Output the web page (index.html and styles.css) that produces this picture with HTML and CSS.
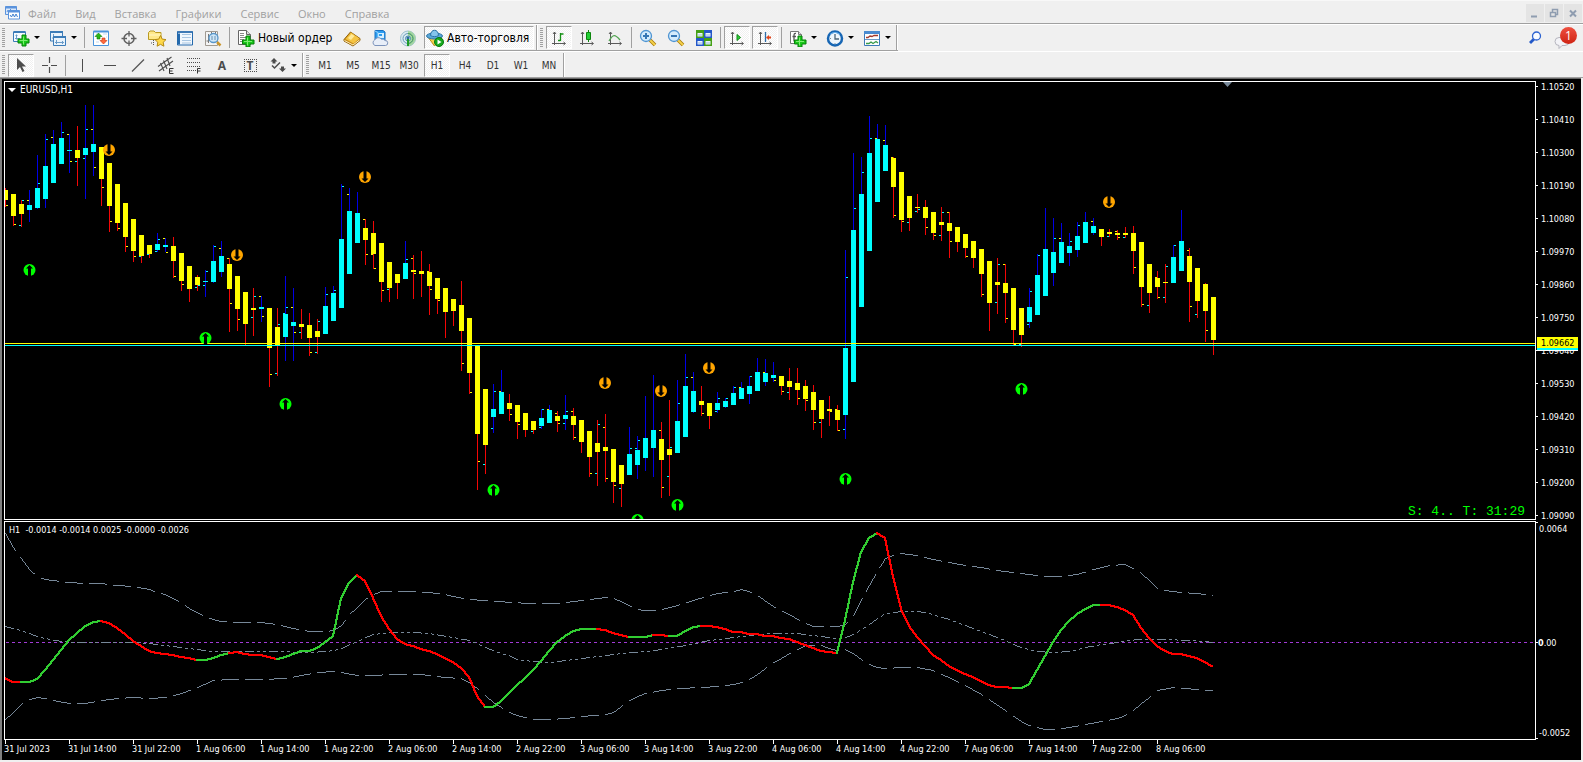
FILE: index.html
```html
<!DOCTYPE html>
<html lang="ru">
<head>
<meta charset="utf-8">
<title>EURUSD,H1</title>
<link rel="stylesheet" href="styles.css">
</head>
<body>
<header class="menubar">
  <svg class="app-icon" viewBox="0 0 16 16" aria-hidden="true"><path d="M.5 1.500h11v8H.5z" fill="#dbe9fb" stroke="#5b93dc"/><path d="M.5 2.500h11" stroke="#5b93dc" stroke-width="2"/><path d="M2 7l1-2 1 1 2-2" fill="none" stroke="#5b93dc"/><path d="M3.500 5.500h11v8.500h-11z" fill="#fff" stroke="#5b93dc"/><path d="M3.500 6.500h11" stroke="#5b93dc" stroke-width="2"/><path d="M5 10l1.500 2L8 9l1.500 3L11 9l1.500 3" fill="none" stroke="#3f7fd0"/></svg>
  <nav class="menu">
    <button>Файл</button><button>Вид</button><button>Вставка</button><button>Графики</button><button>Сервис</button><button>Окно</button><button>Справка</button>
  </nav>
  <div class="window-buttons">
    <button aria-label="Свернуть"><svg viewBox="0 0 18 18"><path d="M5 12.500h6" stroke="#8f9db0" stroke-width="2"/></svg></button>
    <button aria-label="Восстановить"><svg viewBox="0 0 18 18"><path d="M7.500 8V5.500h5v5H11M5.500 8.500h5v4h-5zM7 5.500h6M5 8.500h6" fill="none" stroke="#8f9db0" stroke-width="1.500"/></svg></button>
    <button aria-label="Закрыть"><svg viewBox="0 0 18 18"><path d="M6 6.500l6 6M12 6.500l-6 6" stroke="#8f9db0" stroke-width="2"/></svg></button>
  </div>
</header>

<div class="dock">
  <div class="toolbar toolbar-main">
    <i class="grip"></i>
    <button class="tool with-caret" aria-label="Новый график"><svg viewBox="0 0 18 18"><path d="M1.500 3h12v9.500h-12z" fill="#f6fbff" stroke="#3c7cb8"/><path d="M1.500 3h12" stroke="#3c7cb8" stroke-width="2"/><path d="M4.500 5.500v5M3 9.500h5M3.500 6.500h2" stroke="#6b9cc8"/><path d="M10 6h4v4h3v4h-3v3h-4v-3H6v-4h4z" fill="#19c819" stroke="#07800b"/><path d="M11.500 7.500v8M7.500 11.500h8" stroke="#7dee70"/></svg></button>
    <button class="tool with-caret" aria-label="Профили"><svg viewBox="0 0 18 18"><path d="M1.500 3h12v9h-12z" fill="#e9f3fc" stroke="#3c7cb8"/><path d="M1 3h13" stroke="#3c7cb8" stroke-width="2"/><path d="M4.500 5v5M3 9h5" stroke="#6b9cc8"/><path d="M4.500 8h12v8.500h-12z" fill="#e9f3fc" stroke="#3c7cb8"/><path d="M4 8h13" stroke="#3c7cb8" stroke-width="2"/><path d="M6 13.500h9M7.500 11v4M13.500 12v3" stroke="#6b9cc8"/></svg></button>
    <i class="sep"></i>
    <button class="tool" aria-label="Обзор рынка"><svg viewBox="0 0 18 18"><path d="M1.500 2.500h15v14h-15z" fill="#fff" stroke="#4a94dc"/><path d="M1.500 2.500h15" stroke="#4a94dc" stroke-width="2"/><path d="M4 5h1M4 13h3M11 5h4M14 8h1" stroke="#c5d9ef"/><path d="M6.500 4l3.500 3.500H8V10H5V7.500H3z" fill="#2bb818" stroke="#0b7d0c" stroke-width=".6"/><path d="M11.500 15L8 11.500h2V9h3v2.500h2z" fill="#ff6a3c" stroke="#c8310e" stroke-width=".6"/></svg></button>
    <button class="tool" aria-label="Окно данных"><svg viewBox="0 0 18 18"><circle cx="9" cy="9.500" r="5" fill="none" stroke="#606060" stroke-width="1.500"/><path d="M9 2v5.500M9 11.500V17M1.500 9.500H7M11 9.500h5.500" stroke="#606060" stroke-width="1.300"/></svg></button>
    <button class="tool" aria-label="Навигатор"><svg viewBox="0 0 18 18"><path d="M.5 3.500L2 2h4l1.500 1.500H13v7H.5z" fill="#ffe98b" stroke="#b99a22"/><path d="M1 6h12" stroke="#fff7c8"/><path d="M5.500 11v6M3 14h2" stroke="#555" stroke-dasharray="1 1"/><path d="M12.500 6.500l1.700 3.600 3.800.5-2.800 2.700.7 3.900-3.400-1.900-3.400 1.900.7-3.900L7 10.600l3.800-.5z" fill="#ffd94a" stroke="#b58a12"/></svg></button>
    <button class="tool" aria-label="Терминал"><svg viewBox="0 0 18 18"><path d="M1.500 3h15v13h-15z" fill="#f1f7fd" stroke="#2469ac"/><path d="M1 3h16" stroke="#2469ac" stroke-width="1.500"/><path d="M3 4.500v11" stroke="#2469ac" stroke-width="2"/><path d="M6 5.500h9M6 8.500h9M6 11.500h9M6 14h9" stroke="#a9c6e2"/></svg></button>
    <button class="tool" aria-label="Тестер стратегий"><svg viewBox="0 0 18 18"><path d="M1.500 2.500h12v14h-12z" fill="#f4f4f4" stroke="#a09a92"/><path d="M4.500 5v9M2.500 12h2M7.500 3v4M11.500 3v4" stroke="#777"/><path d="M13 13l3.500 3.500" stroke="#c9962e" stroke-width="2.500"/><circle cx="9.500" cy="9" r="4.500" fill="#cbe6fa" fill-opacity=".9" stroke="#5997cb" stroke-width="1.300"/><path d="M8 7v4M11 7v4" stroke="#6a91b0"/></svg></button>
    <i class="sep"></i>
    <button class="tool text-tool order"><svg viewBox="0 0 18 18"><path d="M1.500 1.500h8l4 4v10h-12z" fill="#fff" stroke="#666"/><path d="M9.500 1.500v4h4" fill="#ddd" stroke="#666"/><path d="M3 4.500h4M3 6.500h4M3 8.500h8M3 10.500h4M3 12.500h2" stroke="#888"/><path d="M9 7h4v4h4v4h-4v3H9v-3H5.500v-4H9z" fill="#19c819" stroke="#07800b"/><path d="M10.500 8.500v8M7 12.500h8" stroke="#7dee70"/></svg><span>Новый ордер</span></button>
    <button class="tool" aria-label="MetaEditor"><svg viewBox="0 0 18 18"><path d="M1 10.500L7.500 3 17 9.500v2L10 17l-9-5z" fill="#c98d18" stroke="#94640a"/><path d="M2.500 10L8 3.500l8.500 6-6 5z" fill="#f5c443"/><path d="M5 9l3.500-4 3 2-3.500 4z" fill="#ffe998"/><path d="M1.500 11.500l8.500 4.500 6.500-5" fill="none" stroke="#fff0c0"/></svg></button>
    <button class="tool" aria-label="Виртуальный хостинг"><svg viewBox="0 0 18 18"><path d="M4 1.500h8l2 1.500v8H4z" fill="#2b9cf0" stroke="#1870c0"/><path d="M7 4h6v5H7z" fill="#d7f0ff"/><path d="M4 2l3 1.500V10" fill="none" stroke="#95d4ff"/><path d="M8 6h3" stroke="#2b9cf0" stroke-width="2"/><path d="M4 16.500a3 3 0 0 1-.3-5.500 4 4 0 0 1 6.800-.8 3 3 0 0 1 3.500 1.300 2.500 2.500 0 0 1 .5 5z" fill="#e8eef8" stroke="#7c93bb"/></svg></button>
    <button class="tool" aria-label="Сигналы"><svg viewBox="0 0 18 18"><circle cx="9" cy="9.500" r="7.500" fill="#dcebf2" stroke="#9dbfce"/><path d="M9 2a7.500 7.500 0 0 1 0 15z" fill="#a3d6a0"/><circle cx="9" cy="9.500" r="5" fill="none" stroke="#679bb8"/><path d="M9 4.500a5 5 0 0 1 0 10" fill="none" stroke="#4fa558"/><circle cx="9" cy="9.500" r="2.500" fill="#cfe6ef" stroke="#4d8bad"/><circle cx="9" cy="9" r="1.500" fill="#2a6aa0"/><path d="M9 10v7" stroke="#1e9a28" stroke-width="2"/></svg></button>
    <button class="tool text-tool auto pressed"><svg viewBox="0 0 18 18"><path d="M2 8l6.500 9 7.500-9z" fill="#f4cf4f" stroke="#b88d1c"/><ellipse cx="8.500" cy="7" rx="8" ry="3" fill="#5aa7d8" stroke="#2b74a8"/><path d="M4.500 6.500c0-7 8-7 8 0-2 1.500-6 1.500-8 0z" fill="#85c5ec" stroke="#2b74a8"/><circle cx="13" cy="13" r="4.500" fill="#17a81c" stroke="#08780d"/><path d="M11.500 10.500l4 2.500-4 2.500z" fill="#fff"/></svg><span>Авто-торговля</span></button>
    <i class="bar-end"></i>
    <i class="grip"></i>
    <button class="tool pressed" aria-label="Бары"><svg viewBox="0 0 18 18"><path d="M4.500 3v13M2 14.500h13M3 5l1.500-2L6 5M13.500 13l2 1.500-2 1.500" fill="none" stroke="#5a5a5a"/><path d="M10.500 4v8M11 5h2.500M8 11.500h2.500" stroke="#159015" stroke-width="1.300"/></svg></button>
    <button class="tool" aria-label="Японские свечи"><svg viewBox="0 0 18 18"><path d="M4.500 3v13M2 14.500h13M3 5l1.500-2L6 5M13.500 13l2 1.500-2 1.500" fill="none" stroke="#5a5a5a"/><path d="M10.500 1v12" stroke="#0c860c"/><path d="M8.500 3.500h4v7h-4z" fill="#22cf35" stroke="#0c860c"/></svg></button>
    <button class="tool" aria-label="Линия"><svg viewBox="0 0 18 18"><path d="M4.500 3v13M2 14.500h13M3 5l1.500-2L6 5M13.500 13l2 1.500-2 1.500" fill="none" stroke="#5a5a5a"/><path d="M3 12c4-7 6-7 11-1" fill="none" stroke="#53a553" stroke-width="1.300"/></svg></button>
    <i class="sep"></i>
    <button class="tool" aria-label="Увеличить"><svg viewBox="0 0 18 18"><path d="M11 11l5 5" stroke="#a87d0b" stroke-width="3.500"/><path d="M11 11l5 5" stroke="#f5d24b" stroke-width="1.800"/><circle cx="7" cy="7" r="5.500" fill="#d3ebfc" stroke="#5095d2" stroke-width="1.300"/><path d="M7 4v6M4 7h6" stroke="#3576b4" stroke-width="2"/></svg></button>
    <button class="tool" aria-label="Уменьшить"><svg viewBox="0 0 18 18"><path d="M11 11l5 5" stroke="#a87d0b" stroke-width="3.500"/><path d="M11 11l5 5" stroke="#f5d24b" stroke-width="1.800"/><circle cx="7" cy="7" r="5.500" fill="#d3ebfc" stroke="#5095d2" stroke-width="1.300"/><path d="M4 7h6" stroke="#3576b4" stroke-width="2"/></svg></button>
    <button class="tool" aria-label="Окна мозаикой"><svg viewBox="0 0 18 18"><path d="M1 1h8v8H1zM9 9h8v8H9z" fill="#45a016"/><path d="M9 1h8v8H9zM1 9h8v8H1z" fill="#2458c9"/><path d="M2.500 4h5v3.500h-5zM10.500 4h5v3.500h-5zM2.500 12h5v3.500h-5zM10.500 12h5v3.500h-5z" fill="#eef6ff"/><path d="M3 6h4M11 6h4M3 14h4M11 14h4" stroke="#9bbad8"/></svg></button>
    <i class="sep"></i>
    <button class="tool pressed" aria-label="Автопрокрутка"><svg viewBox="0 0 18 18"><path d="M4.500 3v13M2 14.500h13M3 5l1.500-2L6 5M13.500 13l2 1.500-2 1.500" fill="none" stroke="#5a5a5a"/><path d="M9 5.500l3.500 3L9 11.500z" fill="#2fd03a" stroke="#118a18"/></svg></button>
    <button class="tool pressed" aria-label="Сдвиг графика"><svg viewBox="0 0 18 18"><path d="M4.500 3v13M2 14.500h13M3 5l1.500-2L6 5M13.500 13l2 1.500-2 1.500" fill="none" stroke="#5a5a5a"/><path d="M9.500 3v10" stroke="#2c6ca8" stroke-width="1.300"/><path d="M10 8.500l3-2.500v1.500h2v2h-2V11z" fill="#e0441b"/></svg></button>
    <i class="sep"></i>
    <button class="tool with-caret" aria-label="Индикаторы"><svg viewBox="0 0 18 18"><path d="M1.500 2.500h8l3 3v9h-11z" fill="#fff" stroke="#777"/><path d="M9.500 2.500v3h3" fill="#ddd" stroke="#777"/><path d="M7 4.500c-2-.5-2 1-2 3v5M3.500 7.500H7" fill="none" stroke="#555" stroke-width="1.300"/><path d="M9 7h4v4h4v4h-4v3H9v-3H5.500v-4H9z" fill="#19c819" stroke="#07800b"/><path d="M10.500 8.500v8M7 12.500h8" stroke="#7dee70"/></svg></button>
    <button class="tool with-caret" aria-label="Периоды"><svg viewBox="0 0 18 18"><circle cx="9" cy="9.500" r="7" fill="#eef6fd" stroke="#1766b4" stroke-width="2.500"/><path d="M4 5.500a7 7 0 0 1 10 0" fill="none" stroke="#66b1ee"/><path d="M9 5v5h4" fill="none" stroke="#4e6577" stroke-width="1.300"/><path d="M9 14v1M4 9.500h1" stroke="#78909f"/></svg></button>
    <button class="tool with-caret" aria-label="Шаблоны"><svg viewBox="0 0 18 18"><path d="M1.500 2.500h15v14h-15z" fill="#fff" stroke="#3e7ab8"/><path d="M1 3.500h16" stroke="#4a8bd0" stroke-width="3"/><path d="M2 10.500h14" stroke="#6b9bc8"/><path d="M3 8.500h2l2-1.500 2 .5 2-1h4" fill="none" stroke="#a33a2c" stroke-width="1.300"/><path d="M3 14.500h3l2-1.500 2 1.500 3-2 2 1.500" fill="none" stroke="#3a9a4a" stroke-width="1.300"/></svg></button>
    <i class="bar-end"></i>
  </div>
  <div class="corner">
    <button aria-label="Поиск"><svg class="search" viewBox="0 0 14 14"><path d="M6 8l-4 4" stroke="#2258c8" stroke-width="2.800"/><circle cx="8.500" cy="5" r="4" fill="#f8fbff" stroke="#2c62d0" stroke-width="1.300"/></svg></button>
    <button class="notify" aria-label="Уведомления"><svg viewBox="0 0 15 12"><path d="M5 .5h6a3.500 3.500 0 0 1 0 8H8L5 11.500v-3a4 4 0 0 1 0-8z" fill="#f3f3f7" stroke="#b5b5be"/></svg><span class="badge">1</span></button>
  </div>
</div>

<div class="toolbar toolbar-lines">
  <i class="grip"></i>
  <button class="tool pressed" aria-label="Курсор"><svg viewBox="0 0 18 18"><path d="M5 2v12l3-3 2.500 5 2-1-2.500-4.500h4z" fill="#4c4c4c"/></svg></button>
  <button class="tool" aria-label="Перекрестие"><svg viewBox="0 0 18 18"><path d="M9.500 1v6M9.500 11v6M2 9.500h6M11 9.500h6" stroke="#4c4c4c" stroke-width="1.200"/></svg></button>
  <i class="sep"></i>
  <button class="tool" aria-label="Вертикальная линия"><svg viewBox="0 0 18 18"><path d="M9.500 3v13" stroke="#4c4c4c"/></svg></button>
  <button class="tool" aria-label="Горизонтальная линия"><svg viewBox="0 0 18 18"><path d="M3 9.500h12" stroke="#4c4c4c"/></svg></button>
  <button class="tool" aria-label="Трендовая линия"><svg viewBox="0 0 18 18"><path d="M3 15.500l12-12" stroke="#555" stroke-width="1.200"/></svg></button>
  <button class="tool" aria-label="Канал"><svg viewBox="0 0 18 18"><path d="M1 10.500L14.500 1M2 15L16 5M3.500 7L7 15M6.500 4.500L10 13M10 2l3 8" stroke="#4c4c4c" stroke-width="1.100"/><path d="M16.500 12.500h-4v5h4M12.500 15h3" fill="none" stroke="#333"/></svg></button>
  <button class="tool" aria-label="Фибоначчи"><svg viewBox="0 0 18 18"><path d="M2 2.500h14M2 6.500h14M2 10.500h14M2 14.500h9" stroke="#4c4c4c" stroke-dasharray="1 1"/><path d="M15.500 12.500h-3v5M12.500 15h3" fill="none" stroke="#333"/></svg></button>
  <button class="tool letter">A</button>
  <button class="tool letter" aria-label="Метка T"><span class="label-box">T</span></button>
  <button class="tool with-caret" aria-label="Стрелки"><svg viewBox="0 0 18 18"><path d="M5 2l3.500 3.500h-2v2h-3v-2h-2zM13.500 16L10 12.500h2v-2h3v2h2z" fill="#4c4c4c"/><path d="M3 9.500l2.500 2.500L11 6.500" fill="none" stroke="#4c4c4c" stroke-width="1.500"/></svg></button>
  <i class="bar-end"></i>
  <i class="grip"></i>
  <button class="tool period">M1</button><button class="tool period">M5</button><button class="tool period">M15</button><button class="tool period">M30</button><button class="tool period pressed">H1</button><button class="tool period">H4</button><button class="tool period">D1</button><button class="tool period">W1</button><button class="tool period">MN</button>
  <i class="bar-end"></i>
</div>

<main class="chart">
  <section class="pane price-pane">
    <svg id="price" class="plot" aria-label="EURUSD,H1"></svg>
    <h1 class="pane-title symbol"><i class="title-caret"></i>EURUSD,H1</h1>
    <p class="countdown">S: 4.. T: 31:29</p>
  </section>
  <svg id="price-axis" class="axis"></svg>
  <section class="pane">
    <svg id="indicator" class="plot" aria-label="H1"></svg>
    <h2 class="pane-title values">H1&nbsp; -0.0014 -0.0014 0.0025 -0.0000 -0.0026</h2>
  </section>
  <svg id="indicator-axis" class="axis"></svg>
  <ol class="times">
    <li>31 Jul 2023</li><li>31 Jul 14:00</li><li>31 Jul 22:00</li><li>1 Aug 06:00</li><li>1 Aug 14:00</li><li>1 Aug 22:00</li><li>2 Aug 06:00</li><li>2 Aug 14:00</li><li>2 Aug 22:00</li><li>3 Aug 06:00</li><li>3 Aug 14:00</li><li>3 Aug 22:00</li><li>4 Aug 06:00</li><li>4 Aug 14:00</li><li>4 Aug 22:00</li><li>7 Aug 06:00</li><li>7 Aug 14:00</li><li>7 Aug 22:00</li><li>8 Aug 06:00</li>
  </ol>
</main>
<script src="chart.js"></script>
</body>
</html>
```

FILE: styles.css
```css
* { box-sizing: border-box; }
body {
  margin: 0;
  height: 100vh;
  display: flex;
  flex-direction: column;
  background: #f0f0f0;
  font-family: "Open Sans", "Noto Sans", sans-serif;
  font-size: 12px;
  color: #000;
  overflow: hidden;
}
button {
  border: 0;
  padding: 0;
  margin: 0;
  background: none;
  font: inherit;
  color: inherit;
}
svg { display: block; flex: none; }

.menubar {
  flex: none;
  height: 24px;
  display: flex;
  align-items: center;
  padding: 2px 1px 0 5px;
  border-top: 1px solid #f8f8f8;
  border-bottom: 1px solid #a0a0a0;
}
.app-icon { width: 16px; height: 16px; }
.menu {
  display: flex;
  gap: 19px;
  margin-left: 7px;
  color: #a0a0a0;
  font-size: 11px;
}
.window-buttons { margin-left: auto; display: flex; gap: 1px; }
.window-buttons button { width: 18px; height: 18px; background: #e4e4e4; }
.window-buttons svg { width: 18px; height: 18px; }

.dock {
  flex: none;
  display: flex;
  justify-content: space-between;
  height: 27px;
  border-top: 1px solid #fff;
}
.toolbar { display: flex; align-items: center; }
.toolbar-main { border-bottom: 1px solid #a0a0a0; }
.toolbar-lines {
  flex: none;
  height: 27px;
  padding-top: 1px;
  border-top: 1px solid #fff;
  border-bottom: 1px solid #a0a0a0;
}
.grip {
  width: 3px;
  height: 20px;
  margin: 0 2px;
  background: repeating-linear-gradient(#a0a0a0 0 1px, #f0f0f0 1px 2px);
}
.sep { width: 1px; height: 21px; margin: 0 2px; background: #a0a0a0; }
.bar-end {
  width: 2px;
  align-self: stretch;
  border-left: 1px solid #a0a0a0;
  border-right: 1px solid #fff;
}
.tool {
  width: 28px;
  height: 23px;
  display: flex;
  align-items: center;
  justify-content: center;
}
.tool svg { width: 18px; height: 18px; }
.tool.pressed {
  width: 26px;
  margin: 0 1px;
  border: 1px solid #fff;
  border-top-color: #a0a0a0;
  border-left-color: #a0a0a0;
  background: repeating-conic-gradient(#fff 0 25%, #f0f0f0 0 50%) 0 0 / 2px 2px;
}
.tool.with-caret { width: 38px; justify-content: flex-start; padding-left: 5px; gap: 4px; }
.tool.with-caret::after {
  content: "";
  border: 3px solid transparent;
  border-top-color: #000;
  border-bottom-width: 0;
}
.tool.with-caret + .tool.with-caret { width: 37px; padding-left: 4px; }
.tool.text-tool {
  justify-content: flex-start;
  gap: 3px;
  font: 12px "DejaVu Sans Condensed", "DejaVu Sans", sans-serif;
  white-space: nowrap;
}
.tool.order { width: 106px; padding-left: 5px; }
.tool.auto { width: 110px; margin: 0 2px; padding-left: 1px; }
.tool.letter { font: bold 12px "Noto Sans", sans-serif; color: #4c4c4c; }
.label-box {
  width: 13px;
  height: 13px;
  border: 1px dotted #4c4c4c;
  line-height: 11px;
}
.tool.period {
  font: 10px "DejaVu Sans Condensed", "DejaVu Sans", sans-serif;
  color: #333;
}

.corner { display: flex; align-items: center; gap: 12px; padding-right: 3px; }
.search { width: 14px; height: 14px; }
.notify { position: relative; width: 26px; height: 24px; }
.notify svg { width: 15px; height: 12px; margin-top: 10px; }
.badge {
  position: absolute;
  top: 1px;
  right: 3px;
  width: 17px;
  height: 17px;
  border-radius: 50%;
  background: linear-gradient(#ee5040, #cf2413);
  color: #fff;
  line-height: 17px;
}

.chart {
  flex: 1;
  min-height: 0;
  display: grid;
  grid-template-columns: 1fr 45px;
  grid-template-rows: 439fr 219fr 19px;
  row-gap: 1px;
  margin: 0 2px 2px 0;
  padding: 2px 0 0 2px;
  background: #000;
  border-top: 1px solid #696969;
  border-left: 2px solid #808080;
  font-family: "DejaVu Sans Condensed", "DejaVu Sans", sans-serif;
  font-size: 9px;
  color: #fff;
}
.pane {
  position: relative;
  min-height: 0;
  border: 1px solid #fff;
  overflow: hidden;
}
.plot, .axis { width: 100%; height: 100%; }
.plot { position: absolute; inset: 0; }
.axis { min-height: 0; overflow: visible; }
.axis text { fill: #fff; }
.axis .current { fill: #000; }
.pane-title {
  position: absolute;
  top: 2px;
  left: 3px;
  margin: 0;
  display: flex;
  align-items: center;
  gap: 4px;
  font-size: 9px;
  font-weight: normal;
  line-height: 12px;
}
.pane-title.symbol { font-size: 10px; }
.pane-title.values { left: 4px; }
.title-caret {
  border: 4px solid transparent;
  border-top-color: #fff;
  border-bottom-width: 0;
}
.countdown {
  position: absolute;
  right: 10px;
  bottom: 0;
  margin: 0;
  color: #0f0;
  font: 13px/15px "Liberation Mono", monospace;
}
.times {
  grid-column: 1 / -1;
  display: flex;
  margin: -1px 0 0;
  padding: 0;
  list-style: none;
}
.times li {
  width: 64px;
  flex: none;
  white-space: nowrap;
  line-height: 10px;
}
.times li::before {
  content: "";
  display: block;
  width: 1px;
  height: 4px;
  margin-left: 1px;
  background: #fff;
}
```

FILE: chart.js
```js
// Per bar: direction, high, body top, body bottom, low, then open/close dashes (side, colour, y).
const BARS = `Y 188 190 200 207 RY205
Y 194 194 216 226 RY224
Y 200 204 214 227 RC200 LC225
C 190 205 210 222 LY200
C 155 188 208 209 RC183
C 134 166 199 208 RC139
C 130 144 183 183 LY137
C 122 138 164 164 RC132
C 134 150 151 173 LY134 RY161
Y 126 150 158 186 LC161
C 105 148 155 199 RC129 LC158
C 105 144 152 176 LY129 RY167
Y 147 147 179 206 RY187
Y 163 163 206 232 RY221
Y 184 184 223 231 RY228
Y 203 203 237 252 RY246
Y 219 219 251 262 RY256
Y 235 235 256 263 LC256
Y 245 245 254 258 LC254
C 233 244 250 252 RC239 LC251
C 238 245 247 252 LY238 RY252
Y 237 246 261 278 RY276
Y 253 253 281 291 RY284
Y 266 266 289 302
Y 275 277 285 291 RC285 LC287
C 270 281 282 297 RC271 LC285
C 245 261 282 283 RC246
C 241 256 272 277 LY248
Y 258 264 289 332 LY258 RY303
Y 276 276 309 331 RY319
Y 292 292 324 345
Y 288 308 310 336 RC296 LC317
C 296 307 309 322 LY296 RY316
Y 308 308 348 387 RY374
Y 308 327 345 376 RC324 LC373
C 276 314 337 361 RC307 LC313
C 288 322 326 361 LY307 RY332
Y 309 324 327 339 LC332
Y 313 325 338 356 RY352
Y 319 331 337 354 RC321 LC352
C 287 306 334 334 RC294
C 286 293 321 321 RC290
C 184 239 308 308 RC186
C 188 211 274 274 LY194
C 192 213 243 243
Y 219 228 240 265 LY219 RY254
Y 221 233 254 269 LY254 RY268
Y 243 243 282 302 RY290
Y 262 262 288 302 LC289
Y 274 274 283 299
C 241 263 279 279 RC259
Y 255 270 272 299 LY258 RY273
Y 251 271 274 297
Y 264 272 286 315 LY271 RY289
Y 278 278 299 314 RY300
Y 288 288 312 338
Y 299 299 311 326
Y 281 305 331 371 RY363
Y 318 318 373 394 RY392
Y 346 346 434 490 RY461
Y 389 389 445 474 LC464
C 384 409 417 433 RC391 LC428
C 370 392 414 414 LY391
Y 394 403 409 421 RY414
Y 405 405 422 439 RY424
Y 413 413 430 437
Y 421 421 430 434 LC431
C 409 418 426 429 RC409 LC427
C 405 410 423 423 LY409
Y 411 416 421 432 LY413 RY423
C 395 415 419 430 RC411 LC423
Y 408 416 425 440 LY411 RY437
Y 420 420 442 453
Y 431 431 457 477 RY473
Y 420 443 452 486 RC424 LC473
Y 414 447 451 482 LY427 RY478
Y 449 449 482 503 RY485
Y 465 465 484 507 LC488
C 427 454 475 475 RC448
C 436 450 465 479 RC440 LC448
C 396 438 458 471
C 375 430 448 477
Y 422 439 460 498 LY430 RY487
Y 400 449 455 496 RC447 LC476
C 380 421 453 453 RC403
C 354 386 437 437 RC377
C 372 391 412 413 LY377
Y 386 401 405 416 RY413
Y 403 403 416 429
C 392 403 410 413 RC398 LC411
C 398 401 407 408 RC398
C 386 393 405 405 RC387
C 382 388 399 399 LY387
C 376 386 394 404 RC376
C 358 372 391 391
C 359 373 382 386 LY372
C 362 375 378 382 RY380
Y 376 376 386 395 RY391
Y 368 381 387 400 LC392
Y 368 383 390 405 RY398
Y 380 386 399 411 LY398 RY400
Y 385 392 410 430 RY422
Y 400 400 419 438 LC422
Y 396 409 411 426 RY411
Y 405 410 420 431 LY409 RY430
C 250 348 415 439 RC277 LC429
C 153 230 382 382 RC208
C 157 194 307 307 RC172
C 116 153 251 251 RC138
C 124 139 202 202 LY138
C 125 145 171 171 LY140
Y 157 158 187 218 LY157 RY215
Y 172 172 220 232 RY221
Y 196 196 218 231 LC222
Y 194 207 208 213 RC209 LC211
Y 200 207 218 235 RY227
Y 212 212 233 240 RY235
Y 207 222 225 241 RC212 LC235
Y 212 223 231 258 LY212 RY241
Y 227 227 242 252
Y 234 234 248 258 RY256
Y 241 241 258 268
Y 249 249 274 297 RY294
Y 261 261 303 331
Y 258 282 285 314 RC264 LC302
Y 264 283 293 323 LY264 RY318
Y 288 288 330 345 RY344
Y 308 308 335 347 LC344
C 288 307 322 328 RC291 LC324
C 254 275 315 315 RC255
C 208 249 296 296
C 218 252 273 286 RC238
C 223 242 263 263 LY238
C 233 246 253 266 RC241
C 222 236 250 257 RC225
C 212 222 243 243
C 218 226 233 235 LY221
Y 229 229 237 246
Y 229 232 234 237 LC236
Y 230 233 235 240 LY231 RY237
Y 227 233 235 238 LC237
Y 226 233 251 274 RY267
Y 242 242 287 307 RY304
Y 264 264 293 313 LC305
Y 271 278 287 299 LY277 RY297
Y 264 282 283 303 RC266 LC297
C 245 257 283 283 RC245
C 210 241 271 271
Y 248 256 282 322 LY250 RY306
Y 268 268 301 318 LC314
Y 283 284 311 342 RY330
Y 297 297 340 355`.split("\n").map(row => row.split(" "));

const BUY = [[29, 270], [205, 338], [285, 404], [493, 490], [637, 520], [677, 505], [845, 479], [1021, 389]];
const SELL = [[109, 150], [237, 255], [365, 177], [605, 383], [661, 391], [709, 368], [1109, 202]];

const OSCILLATOR = [678, 682, 682, 682, 679, 670, 660, 650, 640, 633, 626, 622, 621, 623, 628, 634, 641, 646, 651, 653,
  654, 655, 657, 658, 660, 660, 658, 655, 653, 652, 654, 655, 655, 657, 659, 657, 654, 651, 651, 648, 642, 636, 598,
  583, 575, 581, 598, 616, 629, 639, 644, 646, 649, 651, 654, 658, 662, 668, 677, 696, 707, 707, 701, 693, 685, 678,
  670, 661, 651, 642, 636, 631, 629, 629, 629, 630, 633, 635, 637, 637, 637, 635, 635, 636, 636, 631, 627, 626, 626,
  627, 629, 632, 632, 634, 634, 636, 636, 638, 639, 642, 645, 648, 651, 652, 653, 620, 582, 552, 538, 533, 538, 577,
  609, 626, 637, 646, 655, 660, 666, 670, 674, 677, 681, 685, 687, 687, 688, 688, 684, 670, 656, 642, 630, 621, 614,
  609, 605, 605, 605, 607, 610, 615, 628, 638, 646, 651, 654, 654, 656, 658, 662, 667];
// Bars at which the oscillator changes colour, starting with red.
const TURNS = [0, 2, 12, 24, 28, 34, 44, 60, 74, 78, 81, 83, 87, 104, 109, 126, 137, 151];

const UPPER = "5,533 13,547 21,558 29,569 37,576 45,579 53,580 69,582 85,583 101,583 117,585 133,586 149,589 157,592 165,594 173,598 181,602 189,608 197,612 205,616 213,619 221,621 245,622 261,622 277,624 293,628 309,631 325,631 333,630 341,625 345,620 349,614 357,607 365,599 373,594 381,591 413,591 429,592 445,594 453,596 469,599 485,600 501,601 509,602 533,603 557,603 565,602 581,600 597,598 605,597 613,598 621,601 629,605 637,609 645,610 653,610 661,609 677,605 693,600 709,595 717,593 733,591 741,589 749,591 757,595 773,606 789,614 801,621 813,626 837,626 845,624 853,615 861,599 869,585 877,571 885,558 893,555 901,553 917,555 933,559 949,562 965,565 981,567 997,570 1013,572 1029,574 1045,576 1057,576 1077,574 1093,569 1109,565 1125,564 1133,568 1141,573 1149,580 1157,588 1165,590 1181,592 1197,593 1213,595";
const MIDDLE = "5,626 21,630 37,636 45,638 61,641 77,642 133,642 149,643 173,646 197,649 213,651 277,651 309,652 325,651 333,650 341,648 349,644 357,641 365,637 373,634 389,632 413,632 429,633 453,637 469,640 477,643 485,647 501,653 509,655 517,659 533,661 549,662 565,660 581,658 597,656 621,653 645,651 661,649 685,645 709,640 741,636 757,634 773,633 797,633 813,635 837,638 845,637 853,634 861,629 869,624 877,618 885,613 893,612 901,611 917,611 925,612 949,619 965,625 981,631 1005,640 1013,644 1021,647 1029,649 1037,651 1053,652 1069,651 1085,647 1101,644 1117,642 1125,640 1141,639 1165,639 1189,640 1205,641 1213,642";
const LOWER = "5,719 13,712 21,704 29,699 37,697 45,698 53,700 69,703 85,703 101,700 117,698 133,697 149,698 165,697 181,693 197,687 213,680 229,679 261,679 285,678 301,675 317,672 333,671 341,672 357,675 373,675 389,674 421,674 445,677 461,678 469,682 477,688 485,695 493,702 501,707 509,712 517,715 525,717 533,719 549,719 565,718 581,716 605,714 613,712 621,706 629,700 637,696 645,693 661,690 677,688 701,687 717,686 733,684 741,682 749,679 757,674 765,668 773,662 781,658 789,653 797,649 805,645 821,645 829,648 837,650 845,649 853,653 861,659 869,664 877,667 885,668 901,667 917,667 933,670 941,674 949,677 965,685 981,694 1005,710 1021,721 1029,725 1045,729 1053,729 1069,727 1085,724 1101,721 1117,718 1125,715 1133,710 1141,703 1149,697 1157,690 1173,687 1197,689 1213,690";

const barX = i => 5 + 8 * i;
const box = (x, y, w, h) => `M${x} ${y}h${w}v${h}h${-w}z`;
const fill = (d, colour) => `<path d="${d}" fill="${colour}" shape-rendering="crispEdges"/>`;

function candles() {
  const layer = { wickC: "", wickY: "", C: "", Y: "" };
  BARS.forEach(([dir, ...rest], i) => {
    const [high, top, bottom, low] = rest.slice(0, 4).map(Number);
    const x = barX(i);
    layer["wick" + dir] += box(x, high, 1, low - high);
    layer[dir] += box(x - 2, top, 5, bottom - top);
    rest.slice(4).forEach(dash => {
      layer[dash[1]] += box(dash[0] === "R" ? x + 1 : x - 2, +dash.slice(2), 2, 1);
    });
  });
  return fill(layer.wickC, "#0000e6") + fill(layer.wickY, "#f40606") + fill(layer.C, "#0ff") + fill(layer.Y, "#ff0");
}

function arrow(x, y, colour, turn) {
  return `<g transform="translate(${x} ${y}) rotate(${turn})"><circle r="6" fill="${colour}"/>` +
    `<path d="M0-5L3.500-1.500H1.500V7h-3V-1.500H-3.500z"/></g>`;
}

// Walks a polyline pixel by pixel, so that dashes keep an even count on steep stretches.
function trace(knots, pattern, size) {
  const period = pattern.reduce((a, b) => a + b, 0);
  let count = 0;
  let d = "";
  for (let k = 1; k < knots.length; k++) {
    const [x0, y0] = knots[k - 1];
    const [x1, y1] = knots[k];
    const steps = Math.max(Math.abs(x1 - x0), Math.abs(y1 - y0));
    for (let s = 0; s < steps; s++, count++) {
      let rest = count % period;
      let part = 0;
      while (rest >= pattern[part]) rest -= pattern[part++];
      if (part % 2 === 0) {
        d += box(Math.round(x0 + (x1 - x0) * s / steps), Math.round(y0 + (y1 - y0) * s / steps), size, size);
      }
    }
  }
  return d;
}

const parse = points => points.split(" ").map(p => p.split(",").map(Number));
const band = (points, pattern) => fill(trace(parse(points), pattern, 1), "#778899");

function oscillator() {
  let out = "";
  for (let t = 1; t < TURNS.length; t++) {
    const from = TURNS[t - 1];
    const knots = OSCILLATOR.slice(from, TURNS[t] + 1).map((y, i) => [barX(from + i) - 1, y - 1]);
    out += fill(trace(knots, [1], 2), t % 2 ? "#f00" : "#32cd32");
  }
  return out;
}

const priceLine = (y, colour) => `<rect x="5" y="${y}" width="100%" height="1" fill="${colour}"/>`;

document.getElementById("price").innerHTML = `<g transform="translate(-5 -82)">` + candles() +
  priceLine(343, "#ff0") + priceLine(345, "#0ff") +
  BUY.map(([x, y]) => arrow(x + 0.5, y, "#0f0", 0)).join("") +
  SELL.map(([x, y]) => arrow(x, y, "#ffa500", 180)).join("") +
  `<path d="M1223 82h9l-4.500 5z" fill="#778899"/></g>`;

document.getElementById("indicator").innerHTML = `<g transform="translate(-5 -522)">` +
  `<path d="M6 642.500H4000" stroke="#a23ad6" stroke-dasharray="3 3"/>` +
  band(UPPER, [18, 6]) + band(LOWER, [18, 6]) + band(MIDDLE, [9, 3, 3, 3, 3, 3]) + oscillator() + `</g>`;

let axis = "";
for (let i = 0; i < 14; i++) {
  const y = 5 + 33 * i;
  axis += `<rect y="${y}" width="2" height="1" fill="#fff"/><text x="5" y="${y + 4}">${(1.1052 - 0.0011 * i).toFixed(5)}</text>`;
}
axis += `<rect x="1" y="256" width="41" height="14" fill="#ff0"/><rect x="1" y="267" width="41" height="2" fill="#0ff"/>` +
  `<rect x="1" y="269" width="41" height="1" fill="#fff"/><text class="current" x="5" y="265">1.09662</text>`;
document.getElementById("price-axis").innerHTML = axis;

document.getElementById("indicator-axis").innerHTML =
  `<rect y="1" width="2" height="1" fill="#fff"/><rect y="121" width="2" height="1" fill="#fff"/><rect y="217" width="2" height="1" fill="#fff"/>` +
  `<text x="3" y="11">0.0064</text><text x="2" y="125"><tspan font-weight="bold">0</tspan>.00</text><text x="3" y="215">-0.0052</text>`;
```
